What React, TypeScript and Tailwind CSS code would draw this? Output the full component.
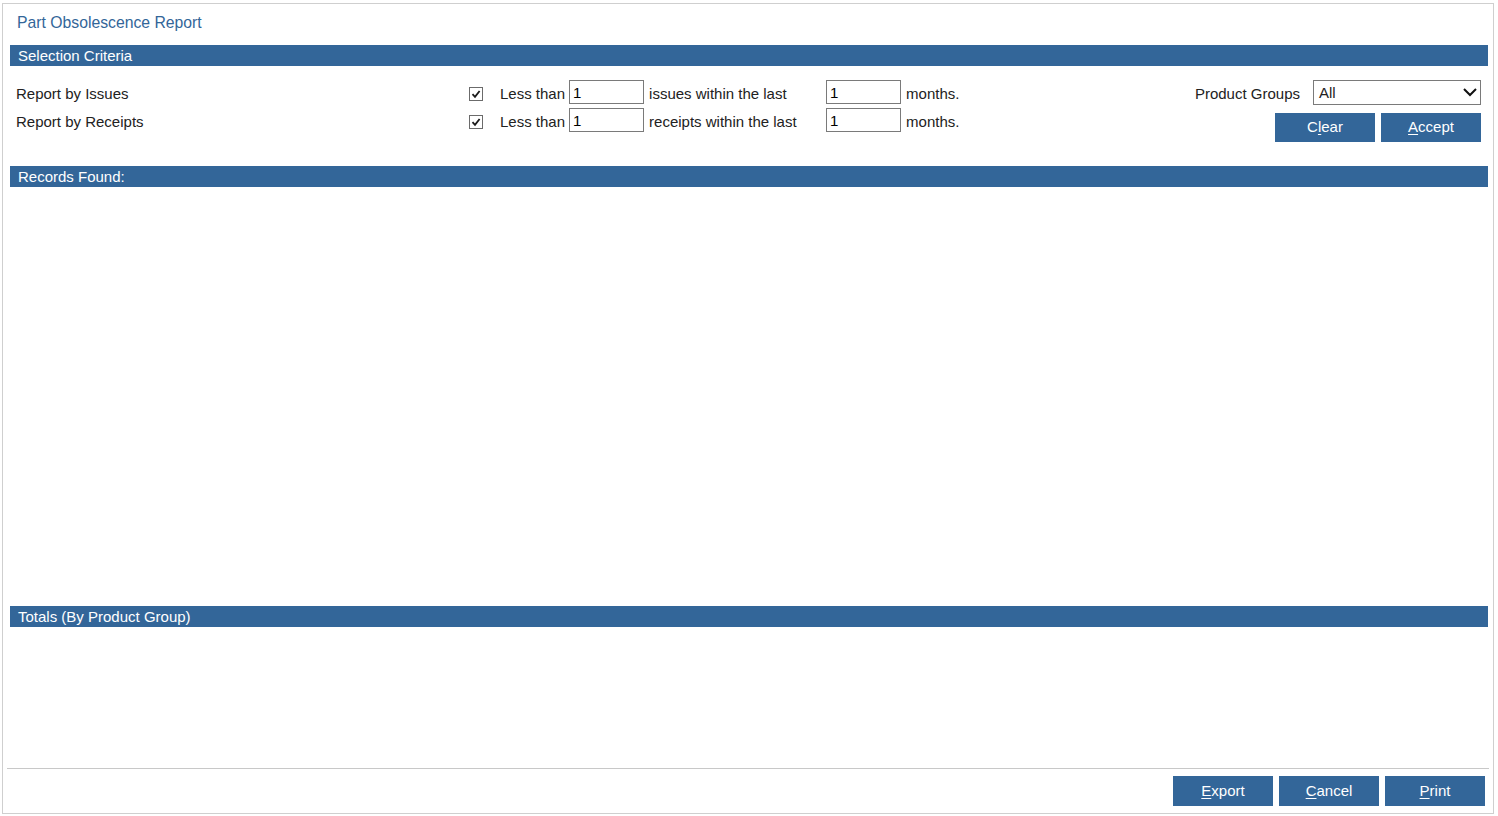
import { useState } from 'react';

function SectionBar({ title }: { title: string }) {
  return (
    <div className="ml-[7px] mr-[5px] h-[21px] bg-[#336699] pl-[8px] text-[15px] leading-[21px] text-white">
      {title}
    </div>
  );
}

function CheckMark({ checked, onChange }: { checked: boolean; onChange: () => void }) {
  return (
    <button
      type="button"
      onClick={onChange}
      className="mt-[3px] flex h-[14px] w-[14px] items-center justify-center border border-[#6b6b6b] bg-white"
    >
      {checked && (
        <svg width="10" height="10" viewBox="0 0 10 10">
          <path d="M1.5 5.2 L4 7.8 L8.6 2" fill="none" stroke="#1a1a1a" strokeWidth="1.8" />
        </svg>
      )}
    </button>
  );
}

function NumberBox({ value, onChange }: { value: string; onChange: (v: string) => void }) {
  return (
    <input
      value={value}
      onChange={(e) => onChange(e.target.value)}
      className="h-[24px] w-[75px] border border-[#7a7a7a] bg-white px-[3px] text-[15px] text-black outline-none"
    />
  );
}

function ActionButton({ label, hotkey }: { label: string; hotkey: number }) {
  return (
    <button
      type="button"
      className="h-[30px] w-[100px] bg-[#336699] text-[15px] text-white"
    >
      {label.slice(0, hotkey)}
      <span className="underline underline-offset-2">{label[hotkey]}</span>
      {label.slice(hotkey + 1)}
    </button>
  );
}

export default function App() {
  const [byIssues, setByIssues] = useState(true);
  const [byReceipts, setByReceipts] = useState(true);
  const [issuesCount, setIssuesCount] = useState('1');
  const [issuesMonths, setIssuesMonths] = useState('1');
  const [receiptsCount, setReceiptsCount] = useState('1');
  const [receiptsMonths, setReceiptsMonths] = useState('1');

  return (
    <div
      className="h-[816px] w-full bg-white pl-[2px] pr-[4px] pt-[3px] pb-[2px] text-[#222]"
      style={{ fontFamily: '"Liberation Sans", Arial, sans-serif' }}
    >
      <div className="flex h-full flex-col border border-[#cfcfcf]">
        <div className="h-[41px] pl-[14px] pt-[7px] text-[15.75px] text-[#336699]">Part Obsolescence Report</div>

        <SectionBar title="Selection Criteria" />

        <div className="flex h-[100px] pl-[13px] pr-[12px] pt-[13px] text-[15px]">
          <div className="w-[453px] pt-[5px]">
            <div className="h-[28px] leading-[20px]">Report by Issues</div>
            <div className="h-[28px] leading-[20px]">Report by Receipts</div>
          </div>

          <div className="flex flex-col gap-[4px] pt-[1px]">
            <div className="flex h-[24px] items-center">
              <CheckMark checked={byIssues} onChange={() => setByIssues(!byIssues)} />
              <span className="ml-[17px] mr-[4px] mt-[4px]">Less than</span>
              <NumberBox value={issuesCount} onChange={setIssuesCount} />
              <span className="ml-[5px] mt-[4px] w-[177px]">issues within the last</span>
              <NumberBox value={issuesMonths} onChange={setIssuesMonths} />
              <span className="ml-[5px] mt-[4px]">months.</span>
            </div>
            <div className="flex h-[24px] items-center">
              <CheckMark checked={byReceipts} onChange={() => setByReceipts(!byReceipts)} />
              <span className="ml-[17px] mr-[4px] mt-[4px]">Less than</span>
              <NumberBox value={receiptsCount} onChange={setReceiptsCount} />
              <span className="ml-[5px] mt-[4px] w-[177px]">receipts within the last</span>
              <NumberBox value={receiptsMonths} onChange={setReceiptsMonths} />
              <span className="ml-[5px] mt-[4px]">months.</span>
            </div>
          </div>

          <div className="ml-auto flex flex-col items-end">
            <div className="flex items-center">
              <span className="mr-[13px] mt-[4px]">Product Groups</span>
              <div className="relative h-[25px] w-[168px] border border-[#7a7a7a] bg-white">
                <span className="absolute left-[5px] top-[1px]">All</span>
                <svg className="absolute right-[3px] top-[6px]" width="14" height="10" viewBox="0 0 14 10">
                  <path d="M1 2 L7 8 L13 2" fill="none" stroke="#111" strokeWidth="2" />
                </svg>
              </div>
            </div>
            <div className="mt-[7px] flex gap-[6px]">
              <button type="button" className="h-[29px] w-[100px] bg-[#336699] text-[15px] text-white">
                C<span className="underline underline-offset-2">l</span>ear
              </button>
              <button type="button" className="h-[29px] w-[100px] bg-[#336699] text-[15px] text-white">
                <span className="underline underline-offset-2">A</span>ccept
              </button>
            </div>
          </div>
        </div>

        <SectionBar title="Records Found:" />
        <div className="h-[419px]" />

        <SectionBar title="Totals (By Product Group)" />
        <div className="h-[141px]" />

        <div className="mx-[4px] border-t border-[#c8c8c8]" />
        <div className="flex justify-end gap-[6px] pr-[8px] pt-[7px]">
          <ActionButton label="Export" hotkey={0} />
          <ActionButton label="Cancel" hotkey={0} />
          <ActionButton label="Print" hotkey={0} />
        </div>
      </div>
    </div>
  );
}
